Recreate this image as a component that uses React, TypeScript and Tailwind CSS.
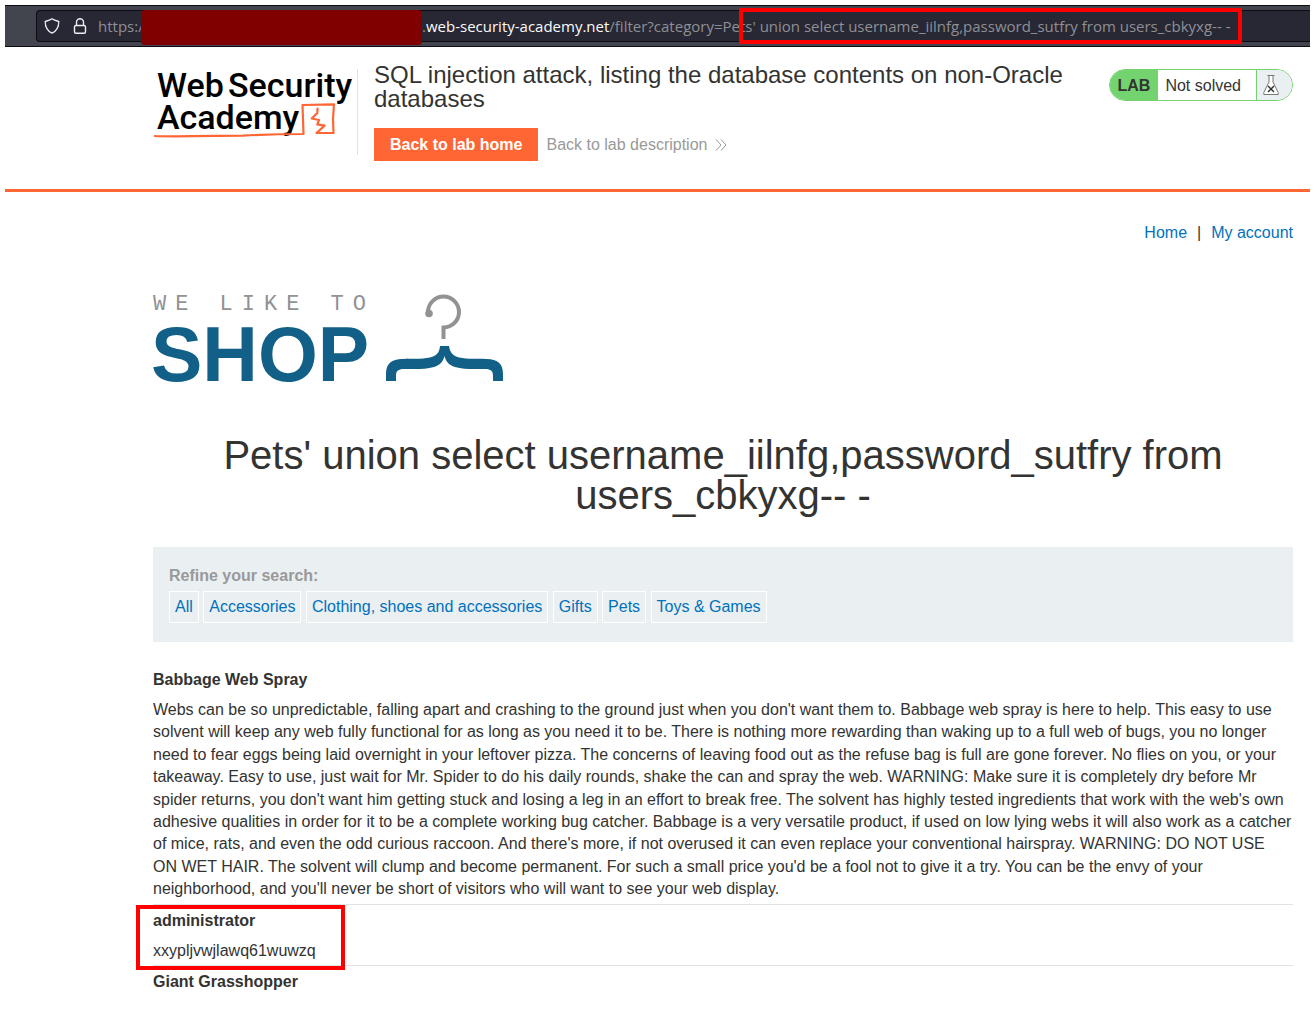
import React from "react";

const categories = ["All", "Accessories", "Clothing, shoes and accessories", "Gifts", "Pets", "Toys & Games"];

const rows = [
  {
    name: "Babbage Web Spray",
    text: "Webs can be so unpredictable, falling apart and crashing to the ground just when you don't want them to. Babbage web spray is here to help. This easy to use solvent will keep any web fully functional for as long as you need it to be. There is nothing more rewarding than waking up to a full web of bugs, you no longer need to fear eggs being laid overnight in your leftover pizza. The concerns of leaving food out as the refuse bag is full are gone forever. No flies on you, or your takeaway. Easy to use, just wait for Mr. Spider to do his daily rounds, shake the can and spray the web. WARNING: Make sure it is completely dry before Mr spider returns, you don't want him getting stuck and losing a leg in an effort to break free. The solvent has highly tested ingredients that work with the web's own adhesive qualities in order for it to be a complete working bug catcher. Babbage is a very versatile product, if used on low lying webs it will also work as a catcher of mice, rats, and even the odd curious raccoon. And there's more, if not overused it can even replace your conventional hairspray. WARNING: DO NOT USE ON WET HAIR. The solvent will clump and become permanent. For such a small price you'd be a fool not to give it a try. You can be the envy of your neighborhood, and you'll never be short of visitors who will want to see your web display.",
  },
  { name: "administrator", text: "xxypljvwjlawq61wuwzq", marked: true },
  { name: "Giant Grasshopper", text: "" },
];

function AddressBar() {
  return (
    <div className="flex h-[42px] border-y border-[#0c0c12] bg-[#42454d] py-1 pl-[31px]">
      <div className="relative flex min-w-0 flex-1 items-center rounded-l border border-r-0 border-[#0c0c12] bg-[#272833] pl-[7px] font-['Open_Sans','Noto_Sans',sans-serif] text-[15px] text-[#8f8f96]">
        <svg className="h-4 w-4 shrink-0" viewBox="0 0 16 16" fill="none" stroke="#ededf0" strokeWidth="1.3" strokeLinejoin="round">
          <path d="M8 .8C6.500 2 4 2.800 1.200 3.500c0 4.500 1 9 6.800 11.700C13.800 12.500 14.800 8 14.800 3.500 12 2.800 9.500 2 8 .8Z" />
        </svg>
        <svg className="ml-3 h-4 w-4 shrink-0" viewBox="0 0 16 16" fill="none" stroke="#ededf0" strokeWidth="1.4">
          <rect x="2.500" y="7.500" width="11" height="7.700" rx="1.500" />
          <path d="M4.500 7.500V4.300a3.500 3.500 0 0 1 7 0v3.200" />
        </svg>
        <span className="ml-[10px] w-[43px] shrink-0 whitespace-nowrap">https:/</span>
        <span className="z-10 -my-px h-[35px] w-[281px] shrink-0 self-start rounded bg-[#800000]" />
        <span className="whitespace-nowrap">
          .<span className="text-[#fbfbfe]">web-security-academy.net</span>
        </span>
        <input
          aria-label="Address"
          className="min-w-0 flex-1 bg-transparent outline-none"
          defaultValue="/filter?category=Pets' union select username_iilnfg,password_sutfry from users_cbkyxg-- -"
        />
        <div className="pointer-events-none absolute -top-[3px] right-[68px] h-9 w-[503px] border-4 border-[#ff0000]" />
      </div>
    </div>
  );
}

function AcademyLogo() {
  return (
    <svg className="h-[72px] w-[203px] shrink-0" viewBox="0 0 203 72" role="img" aria-label="Web Security Academy">
      <g className="font-['Roboto',sans-serif] text-[34px] font-medium" fill="#000">
        <text x="4" y="28">Web</text>
        <text x="75" y="28">Security</text>
        <text x="4" y="60">Academy</text>
      </g>
      <g fill="none" stroke="#ff6633" strokeWidth="2.2" strokeLinejoin="round">
        <path d="M1 67Q14 67.500 40 67.200T90 66.600Q120 65 150.500 65L149.500 36 181 35.300 180 50 180.500 64 163.500 64 171.600 56.600 164.300 55.300 166 51 158.700 49.500 164.300 44 164.600 38.700" />
      </g>
    </svg>
  );
}

function ShopLogo() {
  return (
    <svg className="mt-[47px] h-[92px] w-[352px] overflow-visible" viewBox="0 0 352 92" role="img" aria-label="We like to shop">
      <text x="0" y="18" fill="#909294" className="font-['Liberation_Mono',monospace] text-[22px] tracking-[9px]">WE LIKE TO</text>
      <text x="-2" y="89" fill="#126087" className="font-['Liberation_Sans',sans-serif] text-[77px] font-bold">SHOP</text>
      <path d="M276 21A15.500 15.500 0 1 1 291.500 36.500V48" fill="none" stroke="#909294" strokeWidth="4" transform="translate(-1 -1)" />
      <circle cx="276" cy="21.500" r="3.800" fill="#909294" />
      <path
        fill="#126087"
        d="M233 89V82C233 71 239 67.500 249 67C262 66.500 272 67.500 280 64.500C285 62.500 286.500 59 287 54H296C296.500 59 299 62.500 303 64.500C311 67.500 321 66.500 334 67C344 67.500 350 71 350 82V89H340V84C340 79 338 77 332 77C320 77 310 77.500 302 75C296 73 293 70 291.500 64C290 70 287 73 281 75C273 77.500 263 77 251 77C245 77 243 79 243 84V89Z"
      />
    </svg>
  );
}

function LabStatus() {
  return (
    <div className="mt-1.5 flex h-8 shrink-0 overflow-hidden rounded-full border border-[#72d36f] bg-white leading-8">
      <span className="bg-[#72d36f] pr-2 pl-2 font-bold">LAB</span>
      <span className="pr-[15px] pl-[7px]">Not solved</span>
      <span className="flex w-9 items-center border-l border-[#72d36f] bg-[#eaeff2] pl-[6px]">
        <svg className="h-[22px] w-4" viewBox="0 0 16 22" fill="#fff" stroke="#777" strokeWidth="1">
          <path d="M4.500 1.500h7M6 1.500V8L.8 18.500v2h14.400v-2L10 8V1.500" />
          <path d="m5 12 6 6m0-6-6 6" stroke="#333" strokeWidth="1.500" />
        </svg>
      </span>
    </div>
  );
}

export default function App() {
  return (
    <div className="min-h-screen bg-white p-[5px] font-['Liberation_Sans',Arial,sans-serif] text-base text-[#333332]">
      <AddressBar />
      <header className="flex h-[145px] items-start border-b-[3px] border-[#ff6633] pt-4 pr-[17px] pl-[148px]">
        <div className="mt-1.5 h-[86px] w-[205px] shrink-0 border-r border-[#e2e2e2]">
          <AcademyLogo />
        </div>
        <div className="ml-4 min-w-0 flex-1 pr-8">
          <h2 className="text-2xl leading-6">SQL injection attack, listing the database contents on non-Oracle databases</h2>
          <div className="mt-[17px] flex items-center gap-2">
            <a href="#home" className="bg-[#ff6633] px-4 leading-[33px] font-bold whitespace-nowrap text-white">Back to lab home</a>
            <a href="#description" className="flex items-center gap-2 whitespace-nowrap text-[#999]">
              Back to lab description
              <svg className="h-3 w-3" viewBox="0 0 12 12" fill="none" stroke="#999" strokeWidth="1">
                <path d="m1 .5 5 5.500-5 5.500M6 .5l5 5.500-5 5.500" />
              </svg>
            </a>
          </div>
        </div>
        <LabStatus />
      </header>

      <main className="pr-[17px] pl-[148px]">
        <nav className="flex justify-end gap-[10px] pt-[29px] leading-6">
          <a href="#" className="text-[#0071bc]">Home</a>
          <span>|</span>
          <a href="#account" className="text-[#0071bc]">My account</a>
        </nav>
        <ShopLogo />
        <h1 className="mt-[51px] px-8 text-center text-[40px] leading-10">
          Pets' union select username_iilnfg,password_sutfry from users_cbkyxg-- -
        </h1>
        <section className="mt-8 h-[95px] bg-[#eaeff2] px-4 pt-[17px]">
          <p className="leading-6 font-bold text-[#999]">Refine your search:</p>
          <div className="mt-[3px]">
            {categories.map((c) => (
              <React.Fragment key={c}>
                <a href="#" className="inline-block border border-white px-[5px] leading-[30px] text-[#0071bc]">{c}</a>{" "}
              </React.Fragment>
            ))}
          </div>
        </section>
        <table className="mt-[22px] w-full text-left">
          <tbody>
            {rows.map((r) => (
              <React.Fragment key={r.name}>
                <tr>
                  <th className="relative pt-[5px] leading-[22px]">
                    {r.name}
                    {r.marked && <div className="pointer-events-none absolute top-0 -left-[17px] h-[65px] w-[209px] border-4 border-[#ff0000]" />}
                  </th>
                </tr>
                {r.text && (
                  <tr className="border-b border-[#e2e2e2]">
                    <td className="pt-2 pb-[3px] leading-[1.4]">{r.text}</td>
                  </tr>
                )}
              </React.Fragment>
            ))}
          </tbody>
        </table>
      </main>
    </div>
  );
}
